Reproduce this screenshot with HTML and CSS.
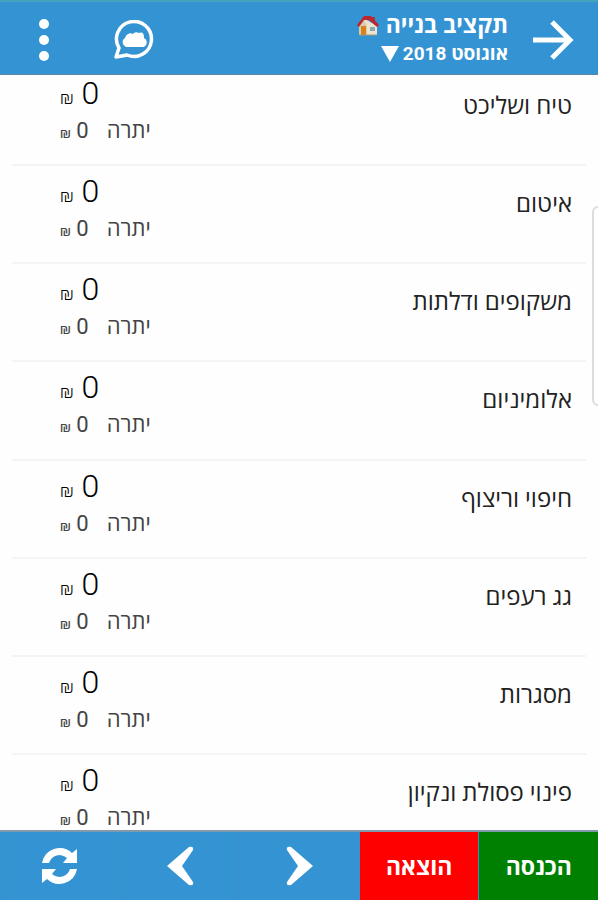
FILE: index.html
```html
<!DOCTYPE html>
<html lang="he" dir="rtl">
<head>
<meta charset="utf-8">
<meta name="viewport" content="width=device-width, initial-scale=1">
<title>תקציב בנייה</title>
<link rel="stylesheet" href="styles.css">
</head>
<body>
<div class="app">
  <header class="topbar">
    <button class="icon-button" type="button" aria-label="חזרה">
      <svg width="42" height="42" viewBox="0 0 42 42" fill="none" stroke="#fff" stroke-width="5"><path d="M1 21H38M20 3L38 21L20 39"/></svg>
    </button>
    <div class="heading">
      <h1 class="title">תקציב בנייה
        <svg class="house" width="24" height="22" viewBox="0 0 24 22">
          <path d="M16 2h3v5h-3z" fill="#a33a35"/>
          <path d="M3 10L9 4L21 11V20H3z" fill="#ece4cf"/>
          <path d="M3 11L8 5L11 11V20H3z" fill="#d8ccb0"/>
          <path d="M5 11h5v9H5z" fill="#d98219"/>
          <path d="M14 12h5v4h-5z" fill="#8ca7b0"/>
          <path d="M3 20h18" stroke="#a99877"/>
          <path d="M8 1H15L23 10L21 12L13 5L8 5L3 12L1 10z" fill="#bd2631"/>
        </svg>
      </h1>
      <button class="month" type="button">אוגוסט 2018
        <svg width="18" height="16" viewBox="0 0 18 16"><path d="M0 0H18L9 16z" fill="#fff"/></svg>
      </button>
    </div>
    <button class="icon-button chat" type="button" aria-label="ענן">
      <svg width="40" height="40" viewBox="0 0 40 40">
        <path d="M2 37L5 28A17.500 17.500 0 1 1 13 35Q8 36 2 37z" fill="none" stroke="#fff" stroke-width="3.500" stroke-linejoin="round"/>
        <path d="M12 27A5 5 0 0 1 11 18A5.500 5.500 0 0 1 19 14Q21 11 25 13Q30 11 30 18A5 5 0 0 1 30 27z" fill="#fff"/>
      </svg>
    </button>
    <button class="icon-button" type="button" aria-label="תפריט">
      <svg width="12" height="42" viewBox="0 0 12 42" fill="#fff"><circle cx="6" cy="5" r="5"/><circle cx="6" cy="21" r="5"/><circle cx="6" cy="37" r="5"/></svg>
    </button>
  </header>

  <main class="content">
    <ul class="list">
      <li class="row"><span class="name">טיח ושליכט</span><div class="sums"><div class="amount">0 <small>₪</small></div><div class="balance"><span>יתרה</span><span>0 <small>₪</small></span></div></div></li>
      <li class="row"><span class="name">איטום</span><div class="sums"><div class="amount">0 <small>₪</small></div><div class="balance"><span>יתרה</span><span>0 <small>₪</small></span></div></div></li>
      <li class="row"><span class="name">משקופים ודלתות</span><div class="sums"><div class="amount">0 <small>₪</small></div><div class="balance"><span>יתרה</span><span>0 <small>₪</small></span></div></div></li>
      <li class="row"><span class="name">אלומיניום</span><div class="sums"><div class="amount">0 <small>₪</small></div><div class="balance"><span>יתרה</span><span>0 <small>₪</small></span></div></div></li>
      <li class="row"><span class="name">חיפוי וריצוף</span><div class="sums"><div class="amount">0 <small>₪</small></div><div class="balance"><span>יתרה</span><span>0 <small>₪</small></span></div></div></li>
      <li class="row"><span class="name">גג רעפים</span><div class="sums"><div class="amount">0 <small>₪</small></div><div class="balance"><span>יתרה</span><span>0 <small>₪</small></span></div></div></li>
      <li class="row"><span class="name">מסגרות</span><div class="sums"><div class="amount">0 <small>₪</small></div><div class="balance"><span>יתרה</span><span>0 <small>₪</small></span></div></div></li>
      <li class="row"><span class="name">פינוי פסולת ונקיון</span><div class="sums"><div class="amount">0 <small>₪</small></div><div class="balance"><span>יתרה</span><span>0 <small>₪</small></span></div></div></li>
    </ul>
    <div class="edge-handle"></div>
  </main>

  <footer class="bottombar">
    <button class="action income" type="button">הכנסה</button>
    <button class="action expense" type="button">הוצאה</button>
    <button class="action" type="button" aria-label="הבא">
      <svg width="28" height="40" viewBox="0 0 28 40"><path d="M1 4Q0 0 5 1L27 20L5 39Q0 40 1 36L12 20z" fill="#fff"/></svg>
    </button>
    <button class="action" type="button" aria-label="הקודם">
      <svg width="28" height="40" viewBox="0 0 28 40"><path d="M27 4Q28 0 23 1L1 20L23 39Q28 40 27 36L16 20z" fill="#fff"/></svg>
    </button>
    <button class="action" type="button" aria-label="רענון">
      <svg width="36" height="36" viewBox="0 0 36 36" fill="#fff">
        <path d="M0 15A18 18 0 0 1 30 5L35 1V15H21L25 10A11 11 0 0 0 7 15z"/>
        <path d="M35 21A18 18 0 0 1 5 31L0 35V21H14L10 26A11 11 0 0 0 28 21z"/>
      </svg>
    </button>
  </footer>
</div>
</body>
</html>
```
FILE: styles.css
```css
* { box-sizing: border-box; }

body {
  margin: 0;
  background: #fefefe;
  color: #222;
  font-family: Roboto, "Open Sans", sans-serif;
}

button {
  padding: 0;
  border: 0;
  background: none;
  color: inherit;
  font: inherit;
}

svg { display: block; }

.app {
  display: grid;
  grid-template-rows: auto 1fr auto;
  height: 100vh;
}

.topbar {
  display: flex;
  align-items: center;
  height: 75px;
  padding: 4px 24px 0 38px;
  border-top: 2px solid #43a3bd;
  border-bottom: 1px solid #5c87a5;
  background: #3494d3;
  color: #fff;
}

.heading {
  flex: 1;
  display: flex;
  flex-direction: column;
  align-items: flex-start;
  margin-inline-start: 24px;
}

.title,
.month {
  display: flex;
  align-items: center;
  margin: 0;
  font-weight: 700;
  line-height: 28px;
}

.title {
  gap: 6px;
  font-size: 23px;
}

.month {
  gap: 4px;
  font-size: 19px;
}

.chat { margin-inline-end: 64px; }

.content {
  position: relative;
  min-height: 0;
  overflow: hidden;
}

.list {
  display: grid;
  grid-auto-rows: 13%;
  height: 100%;
  margin: -7px 0 0;
  padding: 0 12px;
  list-style: none;
}

.row {
  display: flex;
  justify-content: space-between;
  padding: 6px 14px 0 48px;
  border-bottom: 2px solid #f4f4f4;
}

.name {
  padding-top: 12px;
  font-size: 24px;
  line-height: 40px;
}

.sums {
  display: flex;
  flex-direction: column;
  align-items: flex-end;
}

.amount {
  width: 88px;
  color: #000;
  font-size: 32px;
  line-height: 38px;
  font-weight: 300;
  text-align: left;
}

.balance {
  display: flex;
  gap: 18px;
  color: #444;
  font-size: 22px;
  line-height: 28px;
}

.amount small { font-size: 18px; }
.balance small { font-size: 14px; }

.edge-handle {
  position: absolute;
  top: 131px;
  right: -6px;
  width: 12px;
  height: 200px;
  border: 2px solid #ddd;
  border-radius: 8px;
  background: #fff;
}

.bottombar {
  display: grid;
  grid-template-columns: repeat(5, 1fr);
  height: 70px;
  border-top: 2px solid #7f9aaa;
  background: #3494d3;
}

.action {
  display: flex;
  align-items: center;
  justify-content: center;
  border-left: 1px solid #3c8fc8;
  color: #fff;
  font-size: 23px;
  font-weight: 700;
}

.income { background: #008000; }
.expense { background: #f00; }
```
